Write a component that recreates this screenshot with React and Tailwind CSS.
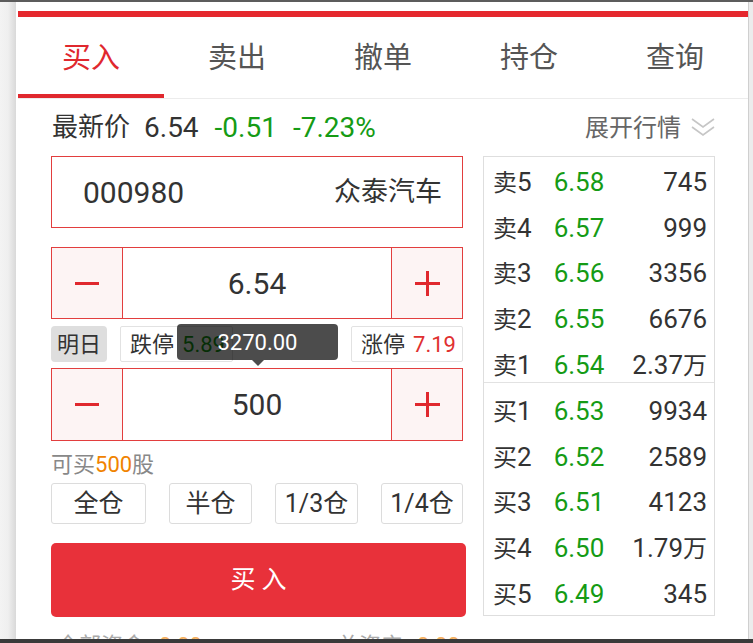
import React from "react";

const sells = [
  ["卖5", "6.58", "745"],
  ["卖4", "6.57", "999"],
  ["卖3", "6.56", "3356"],
  ["卖2", "6.55", "6676"],
  ["卖1", "6.54", "2.37万"],
];
const buys = [
  ["买1", "6.53", "9934"],
  ["买2", "6.52", "2589"],
  ["买3", "6.51", "4123"],
  ["买4", "6.50", "1.79万"],
  ["买5", "6.49", "345"],
];

function BookRow({ r }) {
  return (
    <div className="h-[45.75px] flex items-center pl-[9px] pr-[7px] text-[26px] leading-none text-[#333]">
      <div className="w-[41px] flex items-baseline">
        <span className="text-[24px]">{r[0][0]}</span>
        <span>{r[0].slice(1)}</span>
      </div>
      <div className="w-[90px] text-center text-[#159b15]">{r[1]}</div>
      <div className="flex-1 text-right">
        {r[2].endsWith("万") ? (
          <>
            {r[2].slice(0, -1)}
            <span className="text-[24px]">万</span>
          </>
        ) : (
          r[2]
        )}
      </div>
    </div>
  );
}

function Stepper({ value, className = "" }) {
  return (
    <div className={"flex border border-[#e23e3e] " + className}>
      <div className="w-[71px] bg-[#fdf4f4] border-r border-[#e23e3e] flex items-center justify-center">
        <div className="w-[24px] h-[3px] bg-[#e0282e]" />
      </div>
      <div className="flex-1 flex items-center justify-center text-[30px] text-[#333]">{value}</div>
      <div className="w-[71px] bg-[#fdf4f4] border-l border-[#e23e3e] flex items-center justify-center relative">
        <div className="w-[25px] h-[3px] bg-[#e0282e]" />
        <div className="absolute w-[3px] h-[25px] bg-[#e0282e]" />
      </div>
    </div>
  );
}

export default function App() {
  const tabs = ["买入", "卖出", "撤单", "持仓", "查询"];
  return (
    <div className="w-[753px] h-[643px] overflow-hidden bg-[#f0f0f0] flex flex-col font-[Roboto,'Noto_Sans_CJK_SC',sans-serif]">
      <div className="h-[2px] shrink-0 bg-[#5c5c5c]" />
      <div className="flex h-[637px] shrink-0">
        <div className="w-[16px] bg-gradient-to-r from-[#f3f3f3] via-[#efefef] to-[#d9d9d9]" />
        <div className="w-[732px] bg-white overflow-hidden flex flex-col">
          <div className="h-[9px] shrink-0" />
          <div className="ml-[2px] h-[6px] shrink-0 bg-[#e5282e]" />
          <div className="ml-[2px] h-[82px] shrink-0 flex border-b border-[#ececec]">
            {tabs.map((t, i) => (
              <div
                key={t}
                className={
                  "flex-1 relative flex items-center justify-center pt-[2px] text-[29px] " +
                  (i === 0 ? "text-[#e0282e]" : "text-[#555]")
                }
              >
                {t}
                {i === 0 && <div className="absolute left-0 right-0 bottom-0 h-[4px] bg-[#e0282e]" />}
              </div>
            ))}
          </div>

          <div className="h-[57px] shrink-0 flex items-center justify-between pl-[36px] pr-[33px]">
            <div className="flex items-center">
              <span className="text-[26px] text-[#333]">最新价</span>
              <span className="ml-[14px] text-[28px] text-[#333]">6.54</span>
              <span className="ml-[16px] text-[28px] text-[#159b15]">-0.51</span>
              <span className="ml-[16px] text-[28px] text-[#159b15]">-7.23%</span>
            </div>
            <div className="flex items-center">
              <span className="text-[24px] text-[#666]">展开行情</span>
              <svg width="24" height="21" viewBox="0 0 24 21" className="ml-[10px]" fill="none" stroke="#c6c6c6" strokeWidth="1.6">
                <polyline points="1,2 12,10 23,2" />
                <polyline points="1,10 12,18 23,10" />
              </svg>
            </div>
          </div>

          <div className="flex items-start pl-[35px] gap-[20px]">
            <div className="w-[412px] shrink-0 flex flex-col">
              <div className="h-[72px] border border-[#e23e3e] flex items-center justify-between pl-[31px] pr-[20px]">
                <span className="text-[30px] text-[#333]">000980</span>
                <span className="text-[27px] text-[#333]">众泰汽车</span>
              </div>
              <Stepper value="6.54" className="mt-[19px] h-[72px]" />
              <div className="mt-[7px] h-[36px] flex items-stretch relative">
                <div className="w-[56px] bg-[#dedede] rounded-[4px] flex items-center justify-center text-[22px] text-[#333]">明日</div>
                <div className="ml-[13px] w-[113px] border border-[#e2e2e2] rounded-[2px] flex items-center pl-[9px] text-[22px] text-[#333]">
                  跌停<span className="ml-[8px] text-[#159b15]">5.89</span>
                </div>
                <div className="ml-auto w-[112px] border border-[#e2e2e2] rounded-[2px] flex items-center pl-[9px] text-[22px] text-[#333]">
                  涨停<span className="ml-[8px] text-[#e03030]">7.19</span>
                </div>
                <div className="absolute left-[126px] top-[-2px] w-[161px] h-[36px] rounded-[4px] bg-black/70 flex items-center justify-center text-[22px] text-white">
                  3270.00
                  <div className="absolute left-1/2 -translate-x-1/2 top-[36px] w-0 h-0 border-l-[6px] border-r-[6px] border-t-[6px] border-l-transparent border-r-transparent border-t-black/70" />
                </div>
              </div>
              <Stepper value="500" className="mt-[6px] h-[73px]" />
              <div className="h-[42px] pt-[4px] flex items-center text-[22px] text-[#888]">
                可买<span className="text-[#f08300]">500</span>股
              </div>
              <div className="h-[41px] flex justify-between">
                {[
                  ["全仓", "w-[95px]"],
                  ["半仓", "w-[83px]"],
                  ["1/3仓", "w-[83px]"],
                  ["1/4仓", "w-[82px]"],
                ].map(([t, w]) => (
                  <div key={t} className={w + " border border-[#dcdcdc] rounded-[3px] flex items-center justify-center text-[25px] text-[#333]"}>
                    {t}
                  </div>
                ))}
              </div>
              <div className="mt-[19px] h-[74px] w-[415px] bg-[#e8313a] rounded-[5px] flex items-center justify-center text-[25px] text-white">
                买&nbsp;入
              </div>
              <div className="mt-[18px] flex text-[22px] leading-[22px]">
                <span className="ml-[6px] text-[#aaa]">全部资金</span>
                <span className="ml-[14px] text-[#f5b060]">0.00</span>
                <span className="ml-[135px] text-[#aaa]">总资产</span>
                <span className="ml-[14px] text-[#f5b060]">0.00</span>
              </div>
            </div>

            <div className="w-[232px] h-[460px] shrink-0 border border-[#dedede]">
              <div className="h-[226px] pt-[2px] border-b border-[#e2e2e2]">
                {sells.map((r) => (
                  <BookRow key={r[0]} r={r} />
                ))}
              </div>
              <div className="pt-[5px]">
                {buys.map((r) => (
                  <BookRow key={r[0]} r={r} />
                ))}
              </div>
            </div>
          </div>
        </div>
        <div className="flex-1 bg-[#ececec] border-l border-[#cfcfcf]" />
      </div>
      <div className="flex-1 bg-[#3a3a3a]" />
    </div>
  );
}
